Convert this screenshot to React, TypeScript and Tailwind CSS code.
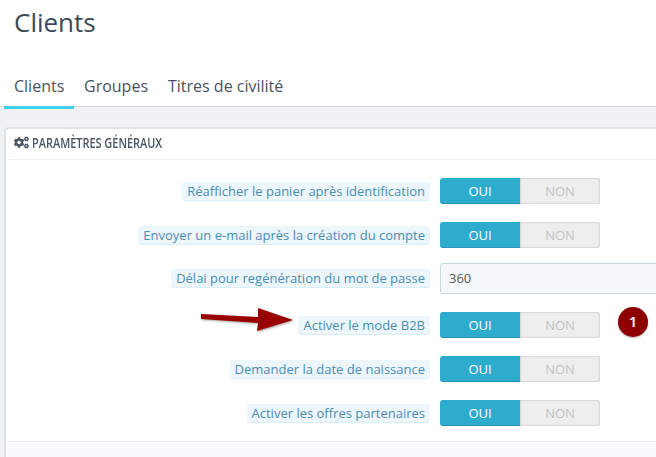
import { FaCogs } from "react-icons/fa"

const font = { fontFamily: '"Open Sans", sans-serif' }

function Label({ text }: { text: string }) {
  return (
    <div className="flex w-[430px] shrink-0 justify-end">
      <span className="rounded-[3px] border-b border-[#d9eef8] bg-[#edf6fb] px-[5px] h-[19px] leading-[18px] text-[13px] text-[#4a8db3] whitespace-nowrap">
        {text}
      </span>
    </div>
  )
}

function Toggle() {
  return (
    <div className="ml-[10px] flex h-[26px] w-[160px] shrink-0 text-[13px] leading-[26px] text-center">
      <div className="w-[80px] rounded-l-[3px] border-b border-[#2594b5] bg-[#2eacce] text-white">OUI</div>
      <div className="w-[80px] rounded-r-[3px] bg-[#eeeeee] text-[#c2c2c2] shadow-[inset_0_0_2px_rgba(0,0,0,0.3)]">NON</div>
    </div>
  )
}

function Row({ text }: { text: string }) {
  return (
    <div className="mb-[18px] flex h-[26px] items-center">
      <Label text={text} />
      <Toggle />
    </div>
  )
}

export default function App() {
  return (
    <div className="h-[457px] w-[656px] overflow-hidden bg-[#eff1f2]" style={font}>
      <header className="h-[107px] border-b border-[#d8dadc] bg-white">
        <h1 className="pl-[14px] pt-[2px] text-[26px] leading-[40px] text-[#3c4a55]">Clients</h1>
        <nav className="mt-[21px] flex pl-[4px] text-[16px] leading-[46px] text-[#46535f]">
          <div className="h-[46px] w-[70px] border-b-[3px] border-[#3ed2f0] pl-[10px] leading-[46px]">Clients</div>
          <div className="ml-[10px] w-[84px]">Groupes</div>
          <div>Titres de civilité</div>
        </nav>
      </header>

      <section className="ml-[4px] mt-[20px] h-[340px] w-[680px] rounded-[5px] border-2 border-[#dfe1e4] border-b-0 border-r-0 bg-white">
        <div className="ml-[3px] flex h-[31px] items-center gap-[3px] border-b border-[#eeeff0] pb-[3px] pl-[5px]">
          <FaCogs className="h-[15px] w-[15px] shrink-0 text-[#4a5560]" />
          <span className="inline-block origin-left scale-x-[0.78] text-[14px] font-semibold whitespace-nowrap text-[#4a5560]">
            PARAMÈTRES GÉNÉRAUX
          </span>
        </div>

        <div className="-ml-[6px] pt-[18px]">
          <Row text="Réafficher le panier après identification" />
          <Row text="Envoyer un e-mail après la création du compte" />
          <div className="-mt-[3px] mb-[18px] flex h-[31px] items-center">
            <Label text="Délai pour regénération du mot de passe" />
            <div className="ml-[10px] h-[31px] w-[240px] shrink-0 rounded-[3px] border border-[#c7d6db] bg-[#f5f8f9] pl-[8px] text-[13px] leading-[29px] text-[#555]">
              360
            </div>
          </div>
          <div className="relative mb-[18px] flex h-[26px] items-center">
            <Label text="Activer le mode B2B" />
            <Toggle />
            {/* arrow sits on top of the row */}
            <svg className="absolute left-[199px] top-[-6px]" width="100" height="30" viewBox="0 0 100 30">
              <path d="M2 8 L59 11 L59 2 L94 14 L58 25 L59 17 L2 13 Z" fill="#9a0000" style={{ filter: "drop-shadow(1px 1px 1px rgba(0,0,0,0.35))" }} />
            </svg>
            <span className="absolute left-[618px] top-[-5px] h-[30px] w-[30px] rounded-full bg-[#8e0000] text-center text-[15px] font-semibold leading-[28px] text-white shadow-[0_1px_2px_rgba(0,0,0,0.3)]">
              1
            </span>
          </div>
          <Row text="Demander la date de naissance" />
          <Row text="Activer les offres partenaires" />
        </div>

        <div className="-mt-[3px] h-[20px] border-t border-[#eeeff0] bg-[#fafbfc]" />
      </section>
    </div>
  )
}
